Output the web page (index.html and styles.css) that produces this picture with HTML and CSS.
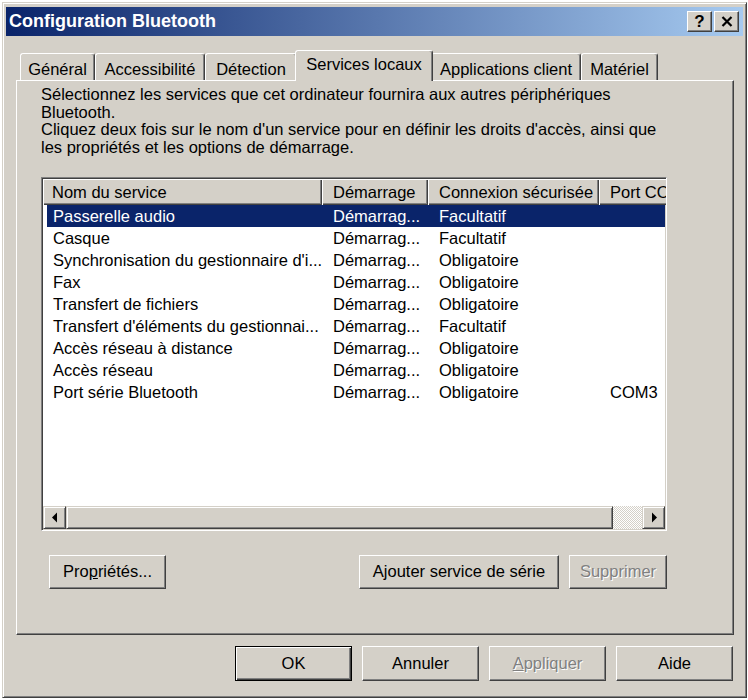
FILE: index.html
```html
<!DOCTYPE html>
<html>
<head>
    <title>Configuration Bluetooth</title>
    <link rel="stylesheet" href="styles.css">
</head>
<body>
    <div class="window">
        <div class="titlebar">
            <span class="title">Configuration Bluetooth</span>
            <div class="caption-buttons">
                <button class="caption-btn help">?</button>
                <button class="caption-btn close">
                    <svg width="12" height="11" viewBox="0 0 12 11">
                        <path d="M1.5 1 L10.5 10 M10.5 1 L1.5 10" stroke="#000" stroke-width="2.2" fill="none"/>
                    </svg>
                </button>
            </div>
        </div>

        <div class="sheet">
            <div class="tabs">
                <div class="tab tab-general">Général</div>
                <div class="tab tab-access">Accessibilité</div>
                <div class="tab tab-detect">Détection</div>
                <div class="tab tab-services active">Services locaux</div>
                <div class="tab tab-apps">Applications client</div>
                <div class="tab tab-hw">Matériel</div>
            </div>

            <div class="page">
                <p class="intro">
                    Sélectionnez les services que cet ordinateur fournira aux autres périphériques<br>
                    Bluetooth.<br>
                    Cliquez deux fois sur le nom d'un service pour en définir les droits d'accès, ainsi que<br>
                    les propriétés et les options de démarrage.
                </p>

                <div class="listview">
                    <div class="lv-header">
                        <div class="lv-head c1">Nom du service</div>
                        <div class="lv-head c2">Démarrage</div>
                        <div class="lv-head c3">Connexion sécurisée</div>
                        <div class="lv-head c4">Port COM</div>
                    </div>
                    <div class="lv-body" id="serviceRows"></div>
                    <div class="hscroll">
                        <div class="sb-btn">
                            <svg width="8" height="11" viewBox="0 0 8 11"><polygon points="6,0.5 6,10.5 1,5.5" fill="#000"/></svg>
                        </div>
                        <div class="sb-track">
                            <div class="sb-thumb"></div>
                        </div>
                        <div class="sb-btn">
                            <svg width="8" height="11" viewBox="0 0 8 11"><polygon points="2,0.5 2,10.5 7,5.5" fill="#000"/></svg>
                        </div>
                    </div>
                </div>

                <div class="page-actions">
                    <button class="btn btn-props">Pro<u>p</u>riétés...</button>
                    <button class="btn btn-add">Ajouter service de série</button>
                    <button class="btn btn-remove" disabled>Supprimer</button>
                </div>
            </div>
        </div>

        <div class="dialog-actions">
            <button class="btn default">OK</button>
            <button class="btn">Annuler</button>
            <button class="btn" disabled><u>A</u>ppliquer</button>
            <button class="btn">Aide</button>
        </div>
    </div>

    <script>
        let services = [
            { name: "Passerelle audio", start: "Démarrag...", security: "Facultatif", port: "" },
            { name: "Casque", start: "Démarrag...", security: "Facultatif", port: "" },
            { name: "Synchronisation du gestionnaire d'i...", start: "Démarrag...", security: "Obligatoire", port: "" },
            { name: "Fax", start: "Démarrag...", security: "Obligatoire", port: "" },
            { name: "Transfert de fichiers", start: "Démarrag...", security: "Obligatoire", port: "" },
            { name: "Transfert d'éléments du gestionnai...", start: "Démarrag...", security: "Facultatif", port: "" },
            { name: "Accès réseau à distance", start: "Démarrag...", security: "Obligatoire", port: "" },
            { name: "Accès réseau", start: "Démarrag...", security: "Obligatoire", port: "" },
            { name: "Port série Bluetooth", start: "Démarrag...", security: "Obligatoire", port: "COM3" }
        ];
        let selected = 0;

        function renderServices() {
            let body = document.getElementById('serviceRows');
            body.innerHTML = '';
            services.forEach((service, i) => {
                let row = `<div class="lv-row${i === selected ? ' selected' : ''}" data-index="${i}">
                    <div class="lv-cell c1">${service.name}</div>
                    <div class="lv-cell c2">${service.start}</div>
                    <div class="lv-cell c3">${service.security}</div>
                    <div class="lv-cell c4">${service.port}</div>
                </div>`;
                body.innerHTML += row;
            });
        }

        document.getElementById('serviceRows').addEventListener('click', function(event) {
            let row = event.target.closest('.lv-row');
            if (!row) return;
            selected = parseInt(row.dataset.index);
            renderServices();
        });

        renderServices();
    </script>
</body>
</html>
```

FILE: styles.css
```css
body {
    margin: 0;
    background: #fff;
    font-family: "Liberation Sans", Arial, sans-serif;
    font-size: 16.5px;
    color: #000;
}
button {
    font: inherit;
    color: inherit;
}

/* window frame */
.window {
    width: 745px;
    height: 696px;
    margin: 2px 0 0 2px;
    box-sizing: border-box;
    padding: 4px 3px 3px 3px;
    background: #d4d0c8;
    border: 1px solid;
    border-color: #d4d0c8 #404040 #404040 #d4d0c8;
    box-shadow: inset 1px 1px #fff, inset -1px -1px #808080;
}
.titlebar {
    height: 29px;
    display: flex;
    align-items: center;
    justify-content: space-between;
    padding: 0 4px 0 3px;
    background: linear-gradient(to right, #0a246a, #a6caf0);
}
.title {
    color: #fff;
    font-weight: bold;
    font-size: 18px;
}
.caption-buttons {
    display: flex;
    gap: 2px;
}
.caption-btn {
    width: 25px;
    height: 21px;
    padding: 0;
    box-sizing: border-box;
    display: flex;
    align-items: center;
    justify-content: center;
    background: #d4d0c8;
    border: 1px solid;
    border-color: #fff #404040 #404040 #fff;
    box-shadow: inset -1px -1px #808080;
}
.caption-btn.help {
    font-weight: bold;
    font-size: 17px;
    line-height: 1;
}

/* tabs */
.sheet {
    width: 718px;
    margin: 14px 0 0 10px;
}
.tabs {
    display: flex;
    align-items: flex-end;
    height: 30px;
    padding-left: 4px;
}
.tab {
    height: 27px;
    box-sizing: border-box;
    display: flex;
    align-items: center;
    justify-content: center;
    padding-top: 5px;
    white-space: nowrap;
    background: #d4d0c8;
    border: 1px solid;
    border-bottom: none;
    border-color: #fff #404040 transparent #fff;
    border-radius: 3px 3px 0 0;
    box-shadow: inset -1px 0 #808080;
}
.tab.active {
    position: relative;
    z-index: 1;
    height: 31px;
    margin: 0 -2px -1px;
    padding: 0 0 4px;
}
.tab-general { width: 75px; }
.tab-access { width: 110px; }
.tab-detect { width: 92px; }
.tab-services { width: 138px; }
.tab-apps { width: 150px; }
.tab-hw { width: 77px; }

.page {
    height: 555px;
    box-sizing: border-box;
    padding: 5px 0 0 24px;
    border: 1px solid;
    border-color: #fff #404040 #404040 #fff;
    box-shadow: inset -1px -1px #808080;
}
.intro {
    margin: 0;
    line-height: 17.7px;
    white-space: nowrap;
}

/* list view */
.listview {
    width: 626px;
    height: 354px;
    margin-top: 20px;
    box-sizing: border-box;
    display: flex;
    flex-direction: column;
    overflow: hidden;
    padding: 1px;
    background: #fff;
    border: 1px solid;
    border-color: #808080 #fff #fff #808080;
    box-shadow: inset 1px 1px #404040, inset -1px -1px #d4d0c8;
}
.lv-header {
    display: flex;
    height: 26px;
    flex-shrink: 0;
}
.lv-head {
    flex-shrink: 0;
    box-sizing: border-box;
    line-height: 26px;
    padding-left: 11px;
    white-space: nowrap;
    overflow: hidden;
    background: #d4d0c8;
    box-shadow: inset 1px 1px #fff, inset -1px -1px #404040, inset -2px -2px #808080;
}
.lv-head.c1 { width: 279px; padding-left: 9px; }
.lv-head.c2 { width: 106px; }
.lv-head.c3 { width: 171px; }
.lv-head.c4 { width: 120px; }

.lv-body {
    flex: 1;
    overflow: hidden;
}
.lv-row {
    display: flex;
    height: 22px;
    line-height: 22px;
    margin-left: 4px;
    white-space: nowrap;
}
.lv-row.selected {
    background: #0a246a;
    color: #fff;
}
.lv-cell {
    flex-shrink: 0;
    box-sizing: border-box;
    padding-left: 11px;
    overflow: hidden;
}
.lv-cell.c1 { width: 275px; padding-left: 6px; }
.lv-cell.c2 { width: 106px; }
.lv-cell.c3 { width: 171px; }
.lv-cell.c4 { width: 66px; }

/* horizontal scrollbar */
.hscroll {
    display: flex;
    height: 23px;
    flex-shrink: 0;
}
.sb-btn, .sb-thumb {
    box-sizing: border-box;
    background: #d4d0c8;
    border: 1px solid;
    border-color: #d4d0c8 #404040 #404040 #d4d0c8;
    box-shadow: inset 1px 1px #fff, inset -1px -1px #808080;
}
.sb-btn {
    width: 23px;
    display: flex;
    align-items: center;
    justify-content: center;
}
.sb-track {
    flex: 1;
    display: flex;
    background: repeating-conic-gradient(#fff 0 25%, #d4d0c8 0 50%) 0 0 / 2px 2px;
}
.sb-thumb {
    width: 547px;
}

/* buttons */
.btn {
    height: 34px;
    padding: 0;
    box-sizing: border-box;
    background: #d4d0c8;
    border: 1px solid;
    border-color: #fff #404040 #404040 #fff;
    box-shadow: inset -1px -1px #808080;
    white-space: nowrap;
}
.btn.default {
    border-color: #000;
    box-shadow: inset 1px 1px #fff, inset -1px -1px #404040, inset -2px -2px #808080;
}
.btn:disabled {
    color: #808080;
    text-shadow: 1px 1px #fff;
}
.page-actions {
    display: flex;
    width: 626px;
    margin-top: 24px;
    padding-left: 8px;
    box-sizing: border-box;
}
.btn-props { width: 117px; }
.btn-add { width: 200px; margin-left: auto; }
.btn-remove { width: 98px; margin-left: 10px; }

.dialog-actions {
    display: flex;
    justify-content: flex-end;
    gap: 10px;
    margin-top: 11px;
    padding-right: 10px;
}
.dialog-actions .btn {
    width: 117px;
    height: 35px;
}
```
